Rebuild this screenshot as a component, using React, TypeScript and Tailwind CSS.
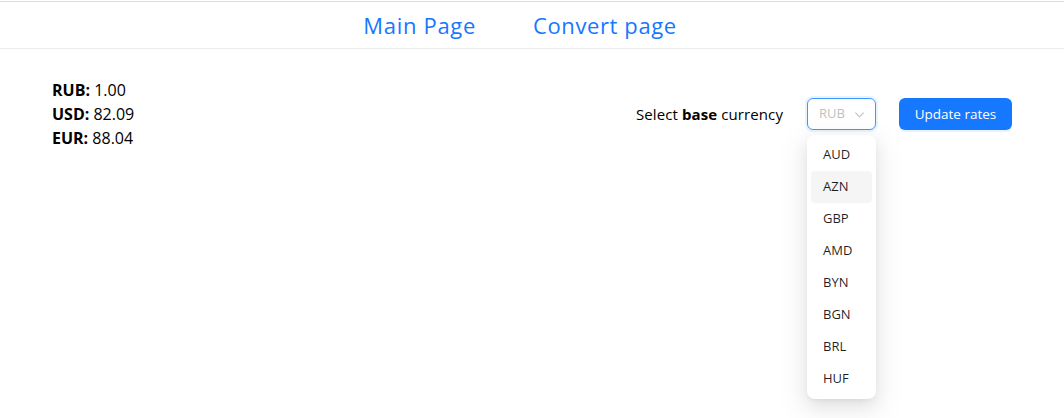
import React from "react";

const items = ["AUD", "AZN", "GBP", "AMD", "BYN", "BGN", "BRL", "HUF"];

export default function App() {
  return (
    <div className="min-h-[418px] bg-white text-[rgba(0,0,0,0.88)]" style={{ fontFamily: "'Open Sans', Lato, sans-serif" }}>
      <div className="mt-px h-[48px] border-t border-b border-t-[#dcdcdc] border-b-[#ededed] flex items-center justify-center gap-[57px] pr-6">
        <a className="text-[22px] text-[#1677ff] leading-none tracking-[0.7px]">Main Page</a>
        <a className="text-[22px] text-[#1677ff] leading-none tracking-[0.6px]">Convert page</a>
      </div>
      <div className="flex items-center justify-between pl-[52px] pr-[52px] pt-[29px]">
        <div className="text-[16px] leading-[24px] text-black">
          <div><b>RUB:</b> 1.00</div>
          <div><b>USD:</b> 82.09</div>
          <div><b>EUR:</b> 88.04</div>
        </div>
        <div className="flex items-center">
          <div className="text-[15px] text-black tracking-[0.1px]">
            Select <b>base</b> currency
          </div>
          <div className="relative ml-6 mr-[23px]">
            <div className="w-[69px] h-[32px] rounded-md border border-[#4096ff] shadow-[0_0_0_2px_rgba(5,145,255,0.1)] flex items-center pl-[11px] pr-[10px] justify-between">
              <span className="text-[13px] text-[#bfbfbf]">RUB</span>
              <svg width="11" height="11" viewBox="0 0 12 12" fill="none" stroke="#bfbfbf" strokeWidth="1.2">
                <path d="M1.5 4l4.5 4.5L10.5 4" />
              </svg>
            </div>
            <div className="absolute left-0 top-[37px] w-[69px] bg-white rounded-lg p-1 shadow-[0_6px_16px_0_rgba(0,0,0,0.08),0_3px_6px_-4px_rgba(0,0,0,0.12),0_9px_28px_8px_rgba(0,0,0,0.05)]">
              {items.map((it, i) => (
                <div
                  key={it}
                  className={
                    "h-[32px] flex items-center pl-3 text-[13px] text-[rgba(0,0,0,0.88)] rounded " +
                    (i === 1 ? "bg-[#f5f5f5]" : "")
                  }
                >
                  {it}
                </div>
              ))}
            </div>
          </div>
          <button className="h-[32px] w-[113px] rounded-md bg-[#1677ff] text-white text-[13.5px] shadow-[0_2px_0_rgba(5,145,255,0.1)]">
            Update rates
          </button>
        </div>
      </div>
    </div>
  );
}
